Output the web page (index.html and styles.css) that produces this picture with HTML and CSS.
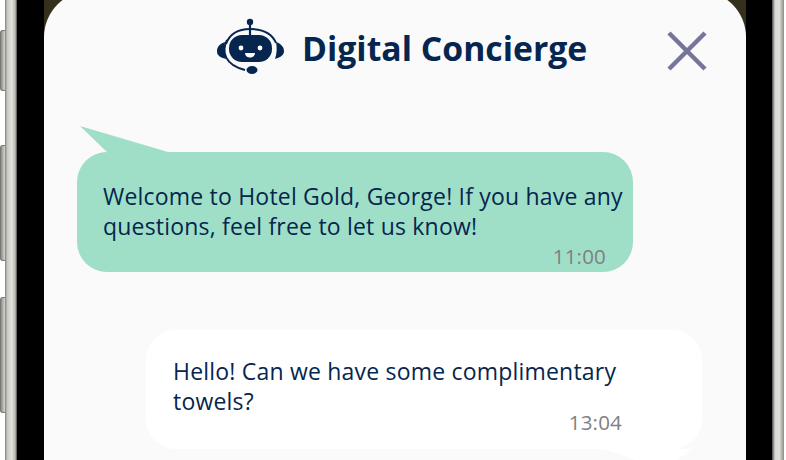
FILE: index.html
```html
<!DOCTYPE html>
<html lang="en">
<head>
    <meta charset="UTF-8">
    <meta name="viewport" content="width=device-width, initial-scale=1.0">
    <title>Digital Concierge</title>
    <link rel="stylesheet" href="styles.css">
</head>
<body>
    <div class="phone">
        <div class="side-buttons">
            <span class="side-btn btn-mute"></span>
            <span class="side-btn btn-up"></span>
            <span class="side-btn btn-down"></span>
        </div>
        <div class="rail"></div>
        <div class="bezel-left"></div>

        <main class="screen">
            <div class="sheet">
                <header class="chat-header">
                    <svg class="bot-icon" viewBox="0 0 70 60" width="70" height="60" aria-hidden="true">
                        <circle cx="34" cy="4" r="3.2" fill="#06264f"/>
                        <path d="M34 6V18" stroke="#06264f" stroke-width="2.2"/>
                        <path d="M10 26C14 15 24 11 34 11C46 11 56 15 60 25" fill="none" stroke="#06264f" stroke-width="2"/>
                        <path d="M9 24C2 26 1 31 1 33C1 37 3 39 10 41C8 35 8 30 9 24Z" fill="#06264f"/>
                        <path d="M60 24C66 26 68 30 68 33C68 37 65 39 59 41C61 35 61 30 60 24Z" fill="#06264f"/>
                        <path d="M11 22C5 34 9 47 29 52" fill="none" stroke="#06264f" stroke-width="2"/>
                        <ellipse cx="36" cy="52" rx="5.5" ry="4" fill="#06264f"/>
                        <rect x="13" y="17" width="43" height="27" rx="13" fill="#06264f"/>
                        <circle cx="25" cy="30" r="2.4" fill="#fff"/>
                        <circle cx="44" cy="30" r="2.4" fill="#fff"/>
                        <path d="M29 35H39C38.500 38.500 36.500 39.500 34 39.500C31.500 39.500 29.500 38.500 29 35Z" fill="#fff"/>
                    </svg>
                    <h1 class="chat-title">Digital Concierge</h1>
                    <svg class="close-icon" viewBox="0 0 40 40" width="40" height="40" aria-hidden="true">
                        <path d="M2 2L38 38M38 2L2 38" stroke="#75759a" stroke-width="4.500"/>
                    </svg>
                </header>

                <div class="messages">
                    <div class="bubble bubble-in">
                        <svg class="tail tail-in" viewBox="0 0 90 28" width="90" height="28" aria-hidden="true">
                            <path d="M0 0L88 26V28H26L27 26Z" fill="#9fdfc7"/>
                        </svg>
                        <p class="msg-text">Welcome to Hotel Gold, George! If you have any questions, feel free to let us know!</p>
                        <span class="msg-time">11:00</span>
                    </div>
                    <div class="bubble bubble-out">
                        <p class="msg-text">Hello! Can we have some complimentary towels?</p>
                        <span class="msg-time">13:04</span>
                        <svg class="tail tail-out" viewBox="0 0 92 11" width="92" height="11" aria-hidden="true">
                            <path d="M0 0H92Q85 6 77 11H35Q20 4 0 0Z" fill="#fff"/>
                        </svg>
                    </div>
                </div>
            </div>
        </main>

        <div class="bezel-right"></div>
        <div class="rail rail-right"></div>
    </div>
</body>
</html>
```

FILE: styles.css
```css
html, body { margin: 0; padding: 0; }
body { width: 786px; height: 460px; overflow: hidden; background: #fff; font-family: "Open Sans", Arial, sans-serif; }

.phone { display: flex; width: 786px; height: 460px; }

.side-buttons { width: 5px; position: relative; flex: none; }
.side-btn { position: absolute; left: 0; width: 5px; box-sizing: border-box; border: 1px solid #77776f; border-right: none; border-radius: 3px 0 0 3px; background: linear-gradient(90deg, #8f8f8a, #d6d6d0); }
.btn-mute { top: 30px; height: 61px; }
.btn-up { top: 145px; height: 116px; }
.btn-down { top: 297px; height: 116px; }

.rail { width: 12px; flex: none; background: linear-gradient(90deg, #85857f 0, #c9c9c3 20%, #e2e2dc 55%, #b9b9b3 85%, #4a4a46 100%); }
.rail-right { background: linear-gradient(90deg, #4a4a46 0, #d8d8d2 25%, #e2e2dc 60%, #8d8d87 100%); }
.bezel-left { width: 27px; flex: none; background: #000; }
.bezel-right { width: 26px; flex: none; background: #000; }

.screen { width: 702px; flex: none; background: #35301c; overflow: hidden; }
.sheet { margin-top: -9px; height: 480px; background: #fafafa; border-radius: 46px 46px 0 0; box-sizing: border-box; padding-top: 27px; }

.chat-header { display: flex; align-items: center; padding: 0 39px 0 172px; height: 60px; }
.bot-icon { flex: none; }
.chat-title { margin: 0 0 0 16px; font-size: 33.750px; font-weight: 700; color: #06264f; white-space: nowrap; }
.close-icon { flex: none; margin: 6px 0 0 auto; }

.messages { display: flex; flex-direction: column; gap: 58px; padding: 74px 44px 0 33px; }
.bubble { position: relative; box-sizing: border-box; display: flex; flex-direction: column; width: 556px; height: 120px; border-radius: 30px; padding: 29px 0 0 26px; }
.bubble-in { background: #9fdfc7; }
.bubble-out { background: #fff; align-self: flex-end; height: 119px; padding-top: 26px; padding-left: 27px; }
.bubble-out .msg-text { padding-right: 60px; }

.msg-text { margin: 0; font-size: 23px; letter-spacing: 0.200px; line-height: 30px; color: #06264f; }
.msg-time { align-self: flex-end; margin: 9px 27px 0 0; font-size: 20.500px; letter-spacing: 0.200px; line-height: 12px; color: #808080; }
.bubble-out .msg-time { margin: 0 80px 0 0; }

.tail { position: absolute; }
.tail-in { left: 3px; top: -26px; }
.tail-out { left: 454px; top: 119px; }
```
